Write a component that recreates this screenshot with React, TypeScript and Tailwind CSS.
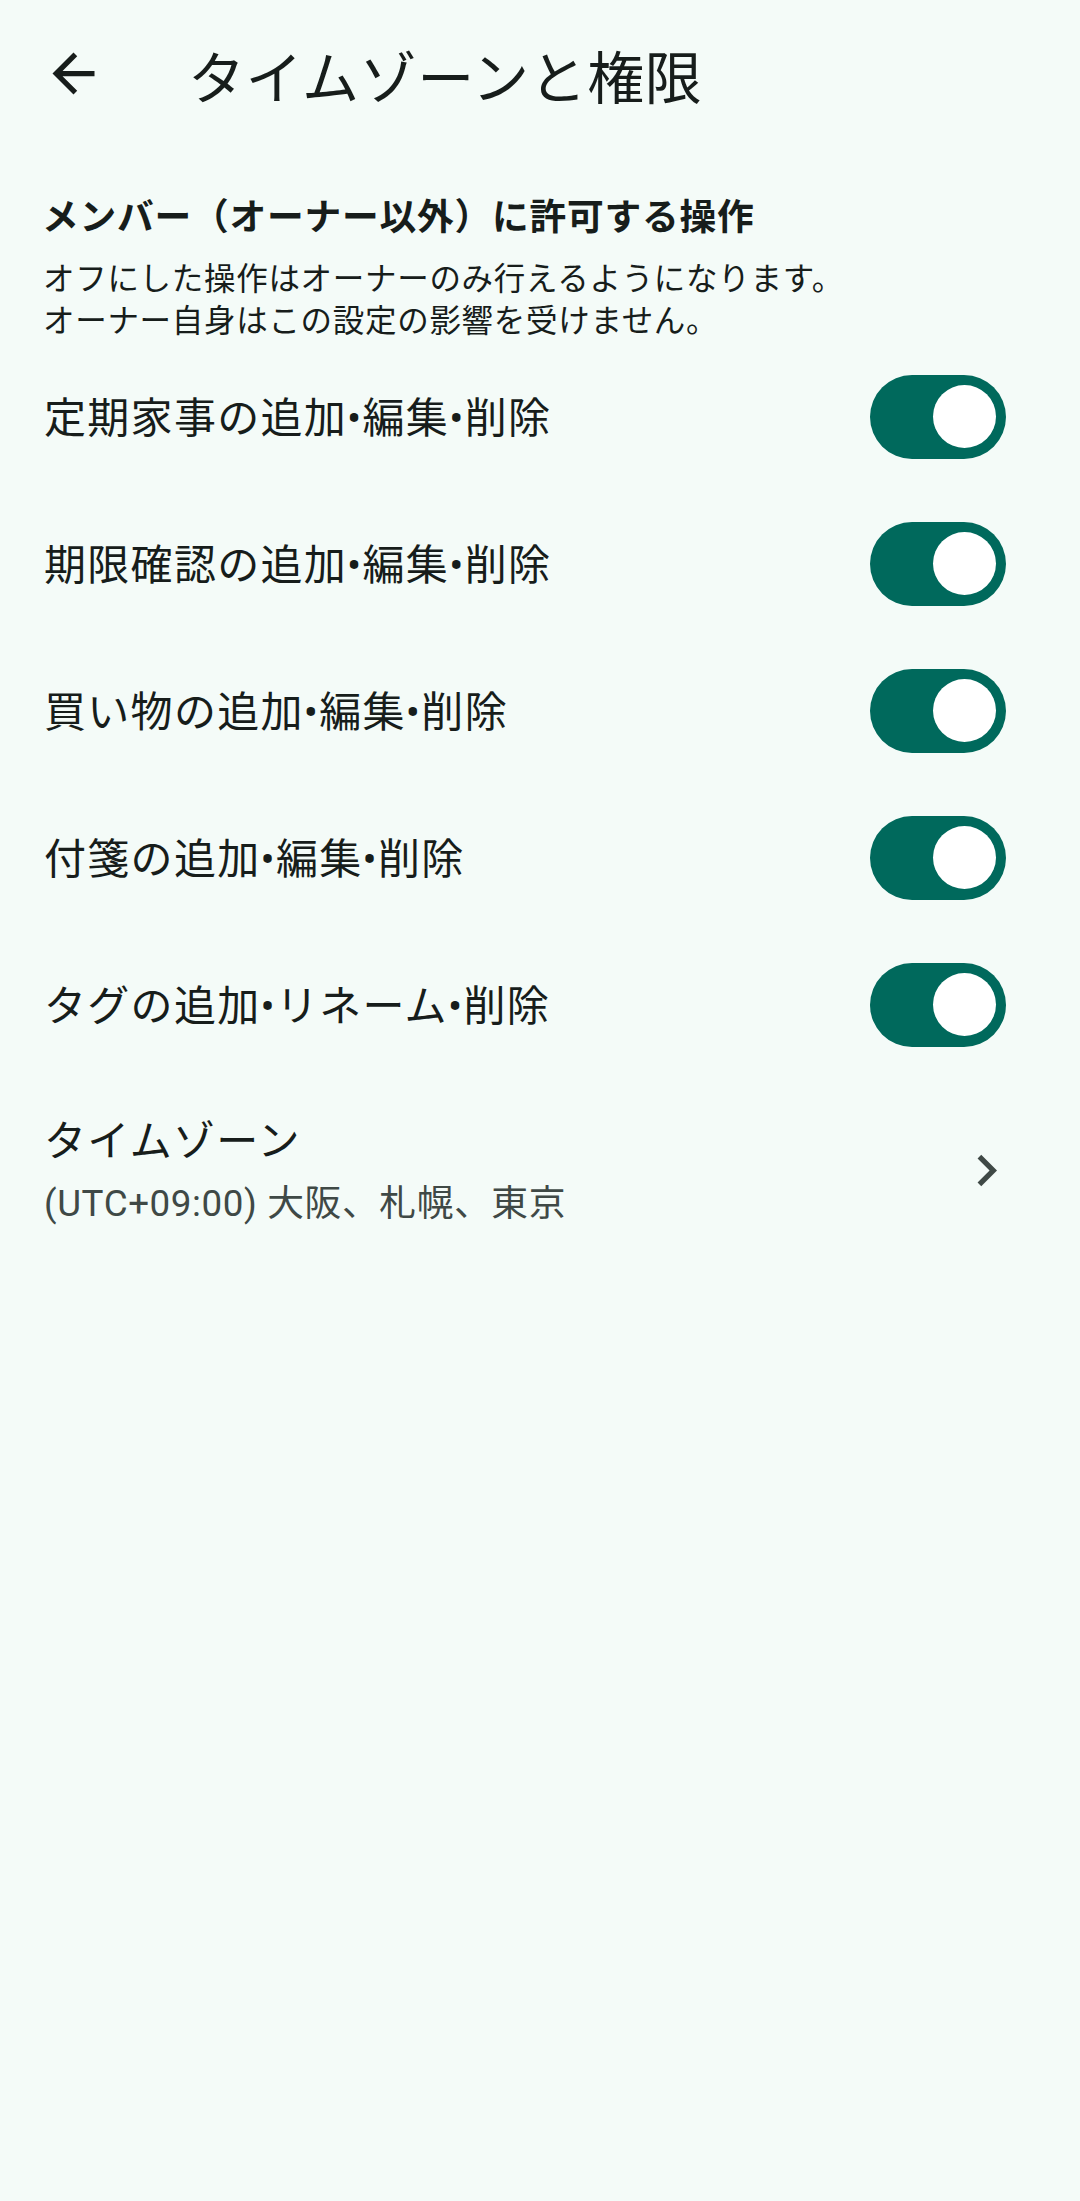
import React from "react";

const FONT = { fontFamily: 'Roboto, "Noto Sans CJK JP", "Noto Sans", sans-serif' };

function Toggle() {
  return (
    <div className="flex h-[84px] w-[136px] shrink-0 items-center justify-end rounded-full bg-[#00695c] pr-[10px]">
      <div className="h-[63px] w-[63px] rounded-full bg-white" />
    </div>
  );
}

function ToggleRow({ label }: { label: string }) {
  return (
    <div className="flex h-[147px] items-center justify-between pl-[44px] pr-[74px]">
      <span className="pt-[5px] text-[42px] leading-[56px] tracking-[1.3px] text-[#171d1b]">{label}</span>
      <Toggle />
    </div>
  );
}

export default function App() {
  const rows = [
    "定期家事の追加•編集•削除",
    "期限確認の追加•編集•削除",
    "買い物の追加•編集•削除",
    "付箋の追加•編集•削除",
    "タグの追加•リネーム•削除",
  ];
  return (
    <div className="min-h-[2201px] w-[1080px] bg-[#f4fbf8] text-[#171d1b]" style={FONT}>
      <header className="flex h-[147px] items-center">
        <div className="ml-[42px] flex h-[63px] w-[63px] items-center justify-center">
          <svg viewBox="0 0 24 24" width="63" height="63" fill="#171d1b">
            <path d="M20 11H7.83l5.59-5.59L12 4l-8 8 8 8 1.41-1.41L7.83 13H20v-2z" />
          </svg>
        </div>
        <h1 className="ml-[83px] pt-[12px] text-[57px] font-normal leading-[70px] tracking-[0.6px] text-[#171d1b]">
          タイムゾーンと権限
        </h1>
      </header>

      <section className="pt-[47px]">
        <h2 className="pl-[42px] text-[36.75px] font-bold leading-[48px] tracking-[0.75px] text-[#171d1b]">
          メンバー（オーナー以外）に許可する操作
        </h2>
        <p className="mt-[17px] pl-[43px] text-[31.5px] leading-[42px] tracking-[0.7px] text-[#171d1b]">
          オフにした操作はオーナーのみ行えるようになります。
          <br />
          オーナー自身はこの設定の影響を受けません。
        </p>
      </section>

      <div className="flex flex-col">
        {rows.map((r) => (
          <ToggleRow key={r} label={r} />
        ))}
      </div>

      <div className="flex items-center justify-between pb-[33px] pl-[44px] pr-[62px] pt-[32px]">
        <div className="flex flex-col">
          <span className="text-[42px] leading-[63px] tracking-[1.3px] text-[#171d1b]">タイムゾーン</span>
          <span className="pt-[4px] text-[36.75px] leading-[53px] tracking-[0.6px] text-[#3f4946]">
            (UTC+09:00) 大阪、札幌、東京
          </span>
        </div>
        <svg viewBox="0 0 24 24" width="63" height="63" fill="#3f4946">
          <path d="M10 6L8.59 7.41 13.17 12l-4.58 4.59L10 18l6-6z" />
        </svg>
      </div>
    </div>
  );
}
